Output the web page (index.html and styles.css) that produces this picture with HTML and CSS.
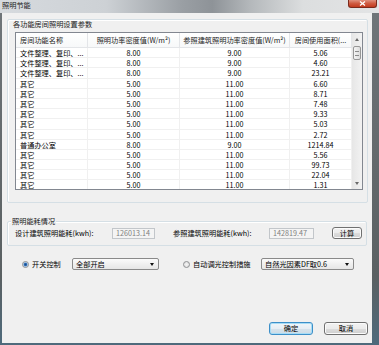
FILE: index.html
```html
<!DOCTYPE html>
<html>
  <head>
    <meta charset="utf-8">
    <title>照明节能</title>
    <link rel="stylesheet" href="styles.css">
  </head>
  <body>
    <div class="window">
      <div class="titlebar">
        <div class="title">照明节能</div>
        <div class="close">
          <svg width="7" height="5" viewBox="0 0 7 5">
            <path d="M1 0.5 L6 4.5 M6 0.5 L1 4.5" stroke="#fff" stroke-width="1.3" />
          </svg>
        </div>
      </div>
      <div class="client">
        <div class="group group-params">
          <div class="group-title">各功能房间照明设置参数</div>
          <div class="list">
            <div class="list-body">
              <div class="row header">
                <div class="cell c1">房间功能名称</div>
                <div class="cell c2">照明功率密度值(W/m²)</div>
                <div class="cell c3">参照建筑照明功率密度值(W/m²)</div>
                <div class="cell c4">房间使用面积(...</div>
              </div>
              <div class="row">
                <div class="cell c1">文件整理、复印、...</div>
                <div class="cell c2">8.00</div>
                <div class="cell c3">9.00</div>
                <div class="cell c4">5.06</div>
              </div>
              <div class="row">
                <div class="cell c1">文件整理、复印、...</div>
                <div class="cell c2">8.00</div>
                <div class="cell c3">9.00</div>
                <div class="cell c4">4.60</div>
              </div>
              <div class="row">
                <div class="cell c1">文件整理、复印、...</div>
                <div class="cell c2">8.00</div>
                <div class="cell c3">9.00</div>
                <div class="cell c4">23.21</div>
              </div>
              <div class="row">
                <div class="cell c1">其它</div>
                <div class="cell c2">5.00</div>
                <div class="cell c3">11.00</div>
                <div class="cell c4">6.60</div>
              </div>
              <div class="row">
                <div class="cell c1">其它</div>
                <div class="cell c2">5.00</div>
                <div class="cell c3">11.00</div>
                <div class="cell c4">8.71</div>
              </div>
              <div class="row">
                <div class="cell c1">其它</div>
                <div class="cell c2">5.00</div>
                <div class="cell c3">11.00</div>
                <div class="cell c4">7.48</div>
              </div>
              <div class="row">
                <div class="cell c1">其它</div>
                <div class="cell c2">5.00</div>
                <div class="cell c3">11.00</div>
                <div class="cell c4">9.33</div>
              </div>
              <div class="row">
                <div class="cell c1">其它</div>
                <div class="cell c2">5.00</div>
                <div class="cell c3">11.00</div>
                <div class="cell c4">5.03</div>
              </div>
              <div class="row">
                <div class="cell c1">其它</div>
                <div class="cell c2">5.00</div>
                <div class="cell c3">11.00</div>
                <div class="cell c4">2.72</div>
              </div>
              <div class="row">
                <div class="cell c1">普通办公室</div>
                <div class="cell c2">8.00</div>
                <div class="cell c3">9.00</div>
                <div class="cell c4">1214.84</div>
              </div>
              <div class="row">
                <div class="cell c1">其它</div>
                <div class="cell c2">5.00</div>
                <div class="cell c3">11.00</div>
                <div class="cell c4">5.56</div>
              </div>
              <div class="row">
                <div class="cell c1">其它</div>
                <div class="cell c2">5.00</div>
                <div class="cell c3">11.00</div>
                <div class="cell c4">99.73</div>
              </div>
              <div class="row">
                <div class="cell c1">其它</div>
                <div class="cell c2">5.00</div>
                <div class="cell c3">11.00</div>
                <div class="cell c4">22.04</div>
              </div>
              <div class="row">
                <div class="cell c1">其它</div>
                <div class="cell c2">5.00</div>
                <div class="cell c3">11.00</div>
                <div class="cell c4">1.31</div>
              </div>
            </div>
            <div class="vscroll">
              <div class="arrow"><span class="tri-up"></span></div>
              <div class="thumb"><span class="grip"></span></div>
              <div class="track"></div>
              <div class="arrow"><span class="tri-down"></span></div>
            </div>
          </div>
        </div>

        <div class="group group-energy">
          <div class="legend">照明能耗情况</div>
          <div class="energy-row">
            <span class="design-label">设计建筑照明能耗(kwh):</span>
            <div class="textbox tb-design">126013.14</div>
            <span class="ref-label">参照建筑照明能耗(kwh):</span>
            <div class="textbox tb-ref">142819.47</div>
            <button class="btn btn-calc">计算</button>
          </div>
        </div>

        <div class="control-row">
          <span class="radio checked"></span>
          <span class="radio-text switch-text">开关控制</span>
          <div class="select select-switch">全部开启<span class="tri-down dark"></span></div>
          <span class="radio radio-dim"></span>
          <span class="radio-text dim-text">自动调光控制措施</span>
          <div class="select select-dim">自然光因素DF取0.6<span class="tri-down dark"></span></div>
        </div>

        <div class="buttons">
          <button class="btn btn-ok">确定</button>
          <button class="btn btn-cancel">取消</button>
        </div>
      </div>
    </div>
  </body>
</html>
```

FILE: styles.css
```css
html, body {
  margin: 0;
  padding: 0;
}
body {
  width: 379px;
  height: 345px;
  overflow: hidden;
  font-family: "Noto Sans CJK SC", "Liberation Sans", sans-serif;
  font-size: 7.2px;
  color: #000;
}
.window {
  width: 379px;
  height: 345px;
  display: flex;
  flex-direction: column;
  background: linear-gradient(to bottom, #70767a 0%, #5a6062 80%, #4e6a7c 100%);
}
.titlebar {
  height: 13px;
  display: flex;
  align-items: flex-start;
  background: linear-gradient(to right, #d6dade 0%, #cdd1d5 28%, #9a9fa4 48%, #8e9398 56%, #b4b8bb 66%, #dcdedf 80%, #e3e4e5 100%);
}
.title {
  padding-left: 2px;
  line-height: 11px;
  color: #1c1c1c;
}
.close {
  margin-left: auto;
  margin-right: 2px;
  width: 29px;
  height: 8px;
  box-sizing: border-box;
  border: 1px solid #7a2a1c;
  border-top: none;
  border-radius: 0 0 3px 3px;
  background: linear-gradient(to bottom, #e0907e 0%, #cf5a40 50%, #c23a1e 100%);
  display: flex;
  justify-content: center;
  align-items: center;
}
.close svg {
  display: block;
}

/* client area */
.client {
  flex: 1;
  margin: 0 7px 2px 2px;
  padding: 6px 0 0 5px;
  background: #f0f0f0;
  box-sizing: border-box;
}
.group {
  box-sizing: border-box;
  border: 1px solid #d5dfe5;
  border-radius: 2px;
  box-shadow: inset 1px 1px 0 #fff;
}
.group-params {
  width: 361px;
  height: 184px;
}
.group-title {
  padding-left: 5px;
  line-height: 9px;
  color: #1a1a1a;
}

/* list view */
.list {
  margin: 3px 0 0 7px;
  width: 348px;
  height: 158px;
  box-sizing: border-box;
  border: 1px solid #828790;
  background: #fff;
  display: flex;
  overflow: hidden;
}
.list-body {
  width: 336px;
  overflow: hidden;
}
.row {
  display: flex;
  height: 10.2px;
  line-height: 10px;
  box-sizing: border-box;
  border-bottom: 1px solid #f0f0f0;
}
.row.header {
  height: 15px;
  line-height: 14px;
  border-bottom: 1px solid #e3e5e8;
  background: linear-gradient(to bottom, #fff, #f7f8f9);
  color: #222;
}
.cell {
  box-sizing: border-box;
  border-right: 1px solid #f0f0f0;
  white-space: nowrap;
  overflow: hidden;
  text-align: center;
}
.header .cell {
  border-right: 1px solid #e3e5e8;
}
.c1 {
  width: 72px;
  padding-left: 4px;
  text-align: left;
}
.c2 {
  width: 92px;
}
.c3 {
  width: 110px;
}
.c4 {
  width: 62px;
}

/* scrollbar */
.vscroll {
  width: 10px;
  display: flex;
  flex-direction: column;
  background: linear-gradient(to right, #e6e6e6, #f2f2f2);
}
.arrow {
  height: 12px;
  display: flex;
  justify-content: center;
  align-items: center;
}
.tri-up {
  width: 0;
  height: 0;
  border-left: 2.5px solid transparent;
  border-right: 2.5px solid transparent;
  border-bottom: 3px solid #6a6a6a;
}
.tri-down {
  width: 0;
  height: 0;
  border-left: 2.5px solid transparent;
  border-right: 2.5px solid transparent;
  border-top: 3px solid #6a6a6a;
}
.thumb {
  margin: 1px 1px 0;
  height: 14px;
  box-sizing: border-box;
  border: 1px solid #979797;
  border-radius: 2px;
  background: linear-gradient(to right, #f4f4f4, #dcdcdc);
  display: flex;
  justify-content: center;
  align-items: center;
}
.grip {
  width: 4px;
  height: 3px;
  border-top: 1px solid #8a8a8a;
  border-bottom: 1px solid #8a8a8a;
}
.track {
  flex: 1;
}

/* energy group */
.group-energy {
  margin-top: 18px;
  width: 360px;
  height: 25px;
}
.legend {
  width: fit-content;
  margin: -5px 0 0 3px;
  padding: 0 1px;
  line-height: 9px;
  background: #f0f0f0;
  color: #1a1a1a;
}
.energy-row {
  display: flex;
  align-items: center;
  height: 12px;
  margin-top: 1px;
  padding-left: 7px;
}
.design-label {
  width: 97px;
  white-space: nowrap;
}
.ref-label {
  width: 96px;
  margin-left: 18px;
  white-space: nowrap;
}
.textbox {
  height: 11px;
  box-sizing: border-box;
  border: 1px solid #c2c6ca;
  background: #f4f4f4;
  color: #808080;
  line-height: 9px;
  padding-left: 3px;
}
.tb-design {
  width: 43px;
}
.tb-ref {
  width: 45px;
}

/* buttons */
.btn {
  font-family: inherit;
  font-size: inherit;
  color: #000;
  padding: 0;
  box-sizing: border-box;
  border: 1px solid #707070;
  border-radius: 3px;
  background: linear-gradient(to bottom, #f2f2f2 0%, #ebebeb 50%, #dddddd 51%, #cfcfcf 100%);
  box-shadow: inset 0 0 0 1px #fbfbfb;
}
.btn-calc {
  margin-left: 18px;
  width: 30px;
  height: 12px;
  line-height: 10px;
}

/* control row */
.control-row {
  display: flex;
  align-items: center;
  height: 12px;
  margin-top: 12px;
  padding-left: 15px;
}
.radio {
  width: 7px;
  height: 7px;
  box-sizing: border-box;
  border-radius: 50%;
  border: 1px solid #8e9092;
  background: radial-gradient(circle, #f4f4f4 0, #dcdcdc 100%);
  margin-right: 3px;
}
.radio.checked {
  background: radial-gradient(circle, #1c4d8c 0, #2c6bb4 1.3px, #b8d2ec 2.2px, #eaeaea 3px);
}
.radio-dim {
  margin-left: 24px;
}
.radio-text {
  white-space: nowrap;
}
.switch-text {
  width: 40px;
}
.dim-text {
  width: 68px;
}
.select {
  height: 12px;
  box-sizing: border-box;
  border: 1px solid #8a8a8a;
  border-radius: 2px;
  background: linear-gradient(to bottom, #fbfbfb 0%, #f0f0f0 50%, #e6e6e6 100%);
  line-height: 10px;
  padding: 0 4px 0 3px;
  display: flex;
  align-items: center;
  justify-content: space-between;
  white-space: nowrap;
}
.select-switch {
  width: 87px;
}
.select-dim {
  width: 93px;
}
.tri-down.dark {
  border-top-color: #111;
}

.buttons {
  display: flex;
  justify-content: flex-end;
  gap: 11px;
  margin-top: 52px;
  padding-right: 4px;
}
.btn-ok,
.btn-cancel {
  width: 44px;
  height: 13px;
  line-height: 11px;
}
.btn-ok {
  border-color: #3c8fc8;
  box-shadow: inset 0 0 0 1px #a6dcf6;
  background: linear-gradient(to bottom, #f0f5f9 0%, #e6eef4 50%, #d6e3ec 51%, #cddbe6 100%);
}
```
